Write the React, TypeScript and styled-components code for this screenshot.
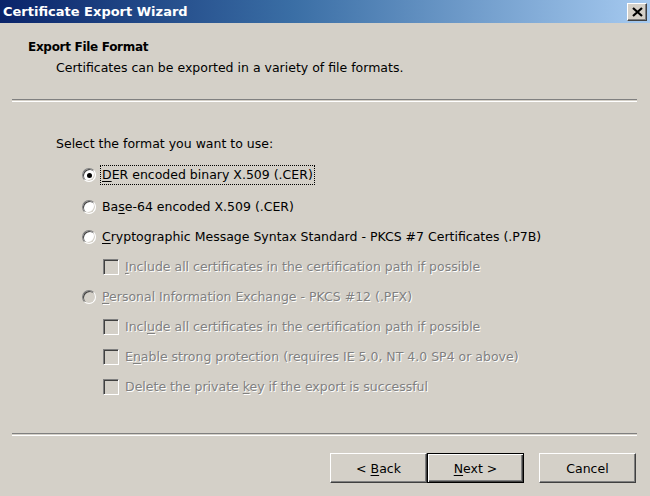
import React from "react";
import styled, { createGlobalStyle, css } from "styled-components";

const Global = createGlobalStyle`
  html, body { margin: 0; padding: 0; background: #d4d0c8; }
  body { font-family: "DejaVu Sans", Tahoma, sans-serif; }
`;

const FACE = "#d4d0c8";

const Window = styled.div`
  width: 650px;
  height: 496px;
  background: ${FACE};
  display: flex;
  flex-direction: column;
  font-family: "DejaVu Sans", Tahoma, sans-serif;
  font-size: 12.5px;
  color: #000;
  overflow: hidden;
`;

const TitleBar = styled.div`
  height: 23px;
  flex: none;
  display: flex;
  align-items: center;
  justify-content: space-between;
  padding: 0 3px 0 3px;
  background: linear-gradient(to right, #0a246a 0%, #3a6ea5 45%, #a6caf0 100%);
`;

const Title = styled.span`
  color: #fff;
  font-weight: bold;
  font-size: 13px;
`;

const CloseButton = styled.div`
  width: 20px;
  height: 18px;
  box-sizing: border-box;
  background: ${FACE};
  display: flex;
  align-items: center;
  justify-content: center;
  border-top: 1px solid #fff;
  border-left: 1px solid #fff;
  border-right: 1px solid #404040;
  border-bottom: 1px solid #404040;
  box-shadow: inset -1px -1px 0 #808080;
`;

const Header = styled.div`
  padding: 15px 0 22px 28px;
`;

const HeaderTitle = styled.div`
  font-weight: bold;
  font-size: 12px;
  letter-spacing: -0.3px;
  line-height: 18px;
`;

const HeaderSub = styled.div`
  margin: 3px 0 0 28px;
  line-height: 18px;
`;

const Separator = styled.div`
  height: 1px;
  flex: none;
  margin: 0 13px 0 12px;
  border-top: 1px solid #808080;
  border-bottom: 1px solid #fff;
`;

const Body = styled.div`
  padding: 33px 0 0 56px;
  flex: 1;
`;

const Prompt = styled.div`
  line-height: 18px;
`;

const Options = styled.div`
  margin-top: 7px;
  display: flex;
  flex-direction: column;
`;

const Row = styled.div<{ $indent: number; $extra?: number }>`
  height: 30px;
  margin-bottom: ${(p) => p.$extra ?? 0}px;
  display: flex;
  align-items: center;
  gap: 7px;
  padding-left: ${(p) => p.$indent}px;
`;

const sunken = css`
  box-sizing: border-box;
  border-top: 1px solid #808080;
  border-left: 1px solid #808080;
  border-right: 1px solid #fff;
  border-bottom: 1px solid #fff;
  box-shadow: inset 1px 1px 0 #404040, inset -1px -1px 0 ${FACE};
`;

const Radio = styled.span<{ $disabled?: boolean; $checked?: boolean }>`
  ${sunken};
  width: 14px;
  height: 14px;
  border-radius: 50%;
  flex: none;
  background: ${(p) => (p.$disabled ? FACE : "#fff")};
  display: flex;
  align-items: center;
  justify-content: center;
  &::after {
    content: "";
    width: 5px;
    height: 5px;
    border-radius: 50%;
    background: #000;
    display: ${(p) => (p.$checked ? "block" : "none")};
  }
`;

const Check = styled.span<{ $disabled?: boolean }>`
  ${sunken};
  width: 16px;
  height: 16px;
  flex: none;
  background: ${(p) => (p.$disabled ? FACE : "#fff")};
`;

const Label = styled.span<{ $disabled?: boolean; $focus?: boolean }>`
  line-height: 16px;
  white-space: nowrap;
  color: ${(p) => (p.$disabled ? "#808080" : "#000")};
  text-shadow: ${(p) => (p.$disabled ? "1px 1px 0 #fff" : "none")};
  padding: 1px 1px;
  outline: ${(p) => (p.$focus ? "1px dotted #000" : "none")};
  outline-offset: 0;
  margin-left: -2px;
`;

const ButtonRow = styled.div`
  display: flex;
  justify-content: flex-end;
  padding: 17px 14px 13px 0;
  flex: none;
`;

const Button = styled.button<{ $default?: boolean; $gap?: number }>`
  width: 97px;
  height: 30px;
  margin-left: ${(p) => p.$gap ?? 0}px;
  font-family: "DejaVu Sans", Tahoma, sans-serif;
  font-size: 12.5px;
  color: #000;
  background: ${FACE};
  box-sizing: border-box;
  padding: 0;
  border-top: 1px solid #fff;
  border-left: 1px solid #fff;
  border-right: 1px solid #404040;
  border-bottom: 1px solid #404040;
  box-shadow: inset -1px -1px 0 #808080;
  ${(p) =>
    p.$default &&
    css`
      border: 1px solid #000;
      box-shadow: inset 1px 1px 0 #fff, inset -1px -1px 0 #404040, inset -2px -2px 0 #808080;
    `}
`;

const U = styled.u`
  text-decoration: underline;
  text-underline-offset: 2px;
`;

export default function App() {
  return (
    <>
      <Global />
      <Window>
        <TitleBar>
          <Title>Certificate Export Wizard</Title>
          <CloseButton>
            <svg width="11" height="10" viewBox="0 0 11 10">
              <path d="M1 1 L10 9 M10 1 L1 9" stroke="#000" strokeWidth="2.2" />
            </svg>
          </CloseButton>
        </TitleBar>
        <Header>
          <HeaderTitle>Export File Format</HeaderTitle>
          <HeaderSub>Certificates can be exported in a variety of file formats.</HeaderSub>
        </Header>
        <Separator />
        <Body>
          <Prompt>Select the format you want to use:</Prompt>
          <Options>
            <Row $indent={26} $extra={2}>
              <Radio $checked />
              <Label $focus>
                <U>D</U>ER encoded binary X.509 (.CER)
              </Label>
            </Row>
            <Row $indent={26}>
              <Radio />
              <Label>
                Ba<U>s</U>e-64 encoded X.509 (.CER)
              </Label>
            </Row>
            <Row $indent={26}>
              <Radio />
              <Label>
                <U>C</U>ryptographic Message Syntax Standard - PKCS #7 Certificates (.P7B)
              </Label>
            </Row>
            <Row $indent={47}>
              <Check $disabled />
              <Label $disabled>
                <U>I</U>nclude all certificates in the certification path if possible
              </Label>
            </Row>
            <Row $indent={26}>
              <Radio $disabled />
              <Label $disabled>
                <U>P</U>ersonal Information Exchange - PKCS #12 (.PFX)
              </Label>
            </Row>
            <Row $indent={47}>
              <Check $disabled />
              <Label $disabled>
                Incl<U>u</U>de all certificates in the certification path if possible
              </Label>
            </Row>
            <Row $indent={47}>
              <Check $disabled />
              <Label $disabled>
                E<U>n</U>able strong protection (requires IE 5.0, NT 4.0 SP4 or above)
              </Label>
            </Row>
            <Row $indent={47}>
              <Check $disabled />
              <Label $disabled>
                Delete the private <U>k</U>ey if the export is successful
              </Label>
            </Row>
          </Options>
        </Body>
        <Separator />
        <ButtonRow>
          <Button>
            &lt; <U>B</U>ack
          </Button>
          <Button $default>
            <U>N</U>ext &gt;
          </Button>
          <Button $gap={15}>Cancel</Button>
        </ButtonRow>
      </Window>
    </>
  );
}
